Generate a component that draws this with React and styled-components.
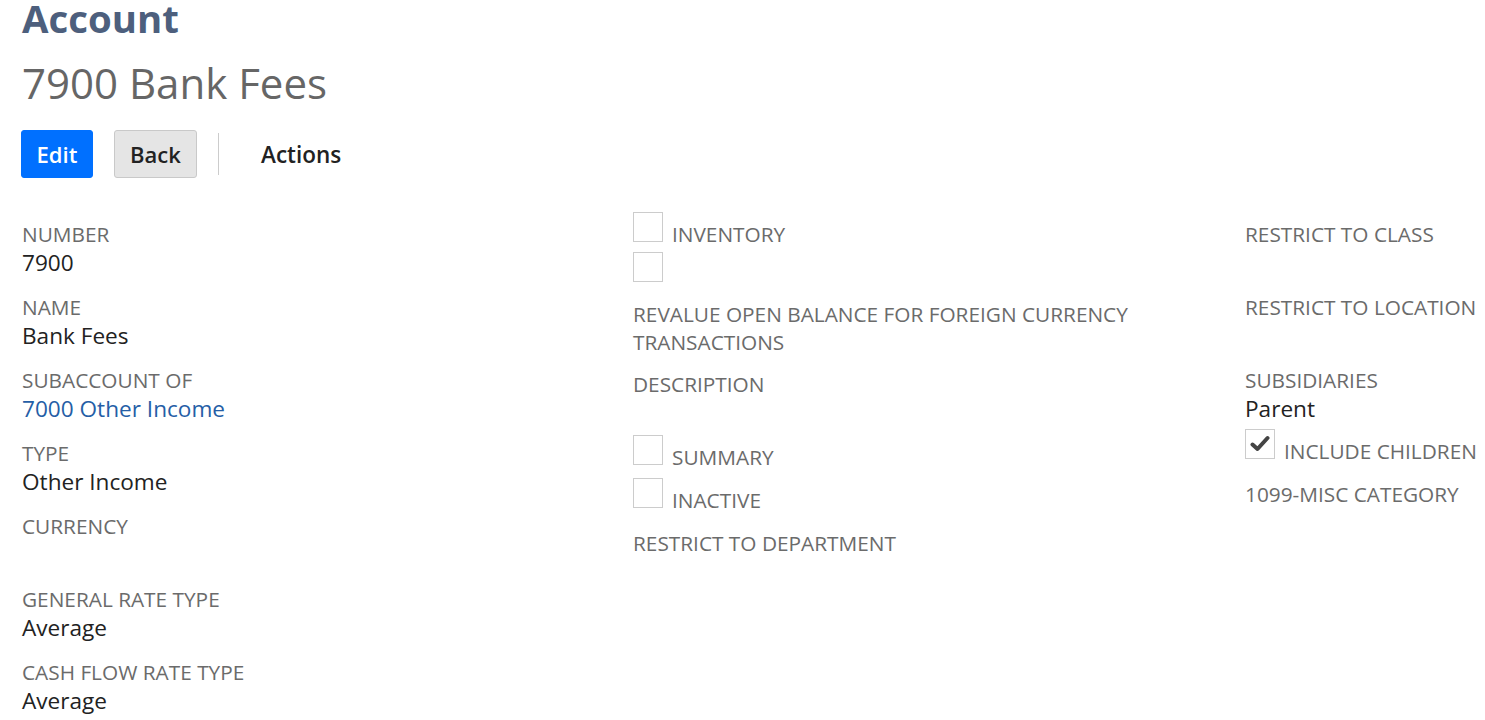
import React from 'react';
import styled, { createGlobalStyle } from 'styled-components';

const GlobalStyle = createGlobalStyle`
  body {
    margin: 0;
    background: #fff;
    font-family: 'Open Sans', 'Noto Sans', sans-serif;
    color: #222;
  }
`;

const Page = styled.div`
  padding: 2px 0 0 22px;
  width: 1485px;
  height: 720px;
  overflow: hidden;
  box-sizing: border-box;
`;

const Title = styled.h1`
  margin: 0;
  font-size: 38.4px;
  line-height: 32px;
  font-weight: 700;
  color: #4d5f7d;
`;

const SubTitle = styled.h2`
  margin: 24px 0 0;
  font-size: 42px;
  line-height: 50px;
  font-weight: 400;
  color: #666;
`;

const Toolbar = styled.div`
  display: flex;
  align-items: center;
  margin: 22px 0 0 -1px;
  height: 48px;
`;

const Button = styled.button`
  height: 48px;
  min-width: ${(p) => p.$width}px;
  padding: 0 14px;
  border-radius: 3px;
  font-family: inherit;
  font-size: 22px;
  font-weight: 600;
  cursor: pointer;
  border: 1px solid ${(p) => (p.$primary ? '#0070ff' : '#c9c9c9')};
  background: ${(p) => (p.$primary ? '#0070ff' : '#e5e5e5')};
  color: ${(p) => (p.$primary ? '#fff' : '#222')};
  margin-right: 21px;
`;

const Divider = styled.div`
  width: 1px;
  height: 42px;
  background: #ccc;
`;

const MenuButton = styled.button`
  border: none;
  background: none;
  font-family: inherit;
  font-size: 22.5px;
  font-weight: 600;
  color: #222;
  padding: 0 0 0 42px;
  cursor: pointer;
`;

const Columns = styled.div`
  display: grid;
  grid-template-columns: 611px 612px 320px;
  margin-top: 34px;
`;

const Column = styled.div`
  display: flex;
  flex-direction: column;
  padding-top: ${(p) => p.$offset || 0}px;
`;

const Field = styled.div`
  margin-bottom: ${(p) => (p.$gap !== undefined ? p.$gap : 15)}px;
`;

const Label = styled.div`
  font-size: 20.8px;
  line-height: 28px;
  color: #6b6b6b;
  text-transform: uppercase;
  white-space: nowrap;
  margin-bottom: ${(p) => p.$gap || 0}px;
`;

const Value = styled.div`
  font-size: 22.6px;
  line-height: 30px;
  min-height: 30px;
  color: #222;
`;

const ValueLink = styled.a`
  color: #255ea6;
  text-decoration: none;
`;

const CheckRow = styled.div`
  display: flex;
  align-items: flex-start;
  gap: 9px;
  margin-bottom: ${(p) => p.$gap || 0}px;
`;

const Box = styled.span`
  width: 28px;
  height: 28px;
  border: 1px solid #ccc;
  background: #fff;
  display: flex;
  align-items: center;
  justify-content: center;
  flex: none;
`;

const CheckLabel = styled.span`
  font-size: 20.8px;
  line-height: 28px;
  padding-top: 8px;
  color: #6b6b6b;
  white-space: nowrap;
`;

const Check = () => (
  <svg width="20" height="18" viewBox="0 0 20 18">
    <path
      d="M2.5 9.5 L7.5 14 L17.5 3"
      fill="none"
      stroke="#444"
      strokeWidth="4"
      strokeLinecap="round"
      strokeLinejoin="round"
    />
  </svg>
);

const Checkbox = ({ label, checked, gap }) => (
  <CheckRow $gap={gap}>
    <Box>{checked && <Check />}</Box>
    {label && <CheckLabel>{label}</CheckLabel>}
  </CheckRow>
);

const App = () => (
  <>
    <GlobalStyle />
    <Page>
      <Title>Account</Title>
      <SubTitle>7900 Bank Fees</SubTitle>
      <Toolbar>
        <Button $primary $width={72}>Edit</Button>
        <Button $width={83}>Back</Button>
        <Divider />
        <MenuButton>Actions</MenuButton>
      </Toolbar>

      <Columns>
        <Column $offset={8}>
          <Field>
            <Label>Number</Label>
            <Value>7900</Value>
          </Field>
          <Field>
            <Label>Name</Label>
            <Value>Bank Fees</Value>
          </Field>
          <Field>
            <Label>Subaccount of</Label>
            <Value>
              <ValueLink href="#">7000 Other Income</ValueLink>
            </Value>
          </Field>
          <Field>
            <Label>Type</Label>
            <Value>Other Income</Value>
          </Field>
          <Field>
            <Label>Currency</Label>
            <Value />
          </Field>
          <Field>
            <Label>General rate type</Label>
            <Value>Average</Value>
          </Field>
          <Field>
            <Label>Cash flow rate type</Label>
            <Value>Average</Value>
          </Field>
        </Column>

        <Column>
          <Checkbox label="INVENTORY" gap={4} />
          <Checkbox gap={18} />
          <Label $gap={14}>
            Revalue open balance for foreign currency
            <br />
            transactions
          </Label>
          <Label $gap={37}>Description</Label>
          <Checkbox label="SUMMARY" gap={7} />
          <Checkbox label="INACTIVE" gap={15} />
          <Label>Restrict to department</Label>
        </Column>

        <Column $offset={8}>
          <Field>
            <Label>Restrict to class</Label>
            <Value />
          </Field>
          <Field>
            <Label>Restrict to location</Label>
            <Value />
          </Field>
          <Field $gap={5}>
            <Label>Subsidiaries</Label>
            <Value>Parent</Value>
          </Field>
          <Checkbox label="INCLUDE CHILDREN" checked gap={15} />
          <Field>
            <Label>1099-MISC Category</Label>
          </Field>
        </Column>
      </Columns>
    </Page>
  </>
);

export default App;
